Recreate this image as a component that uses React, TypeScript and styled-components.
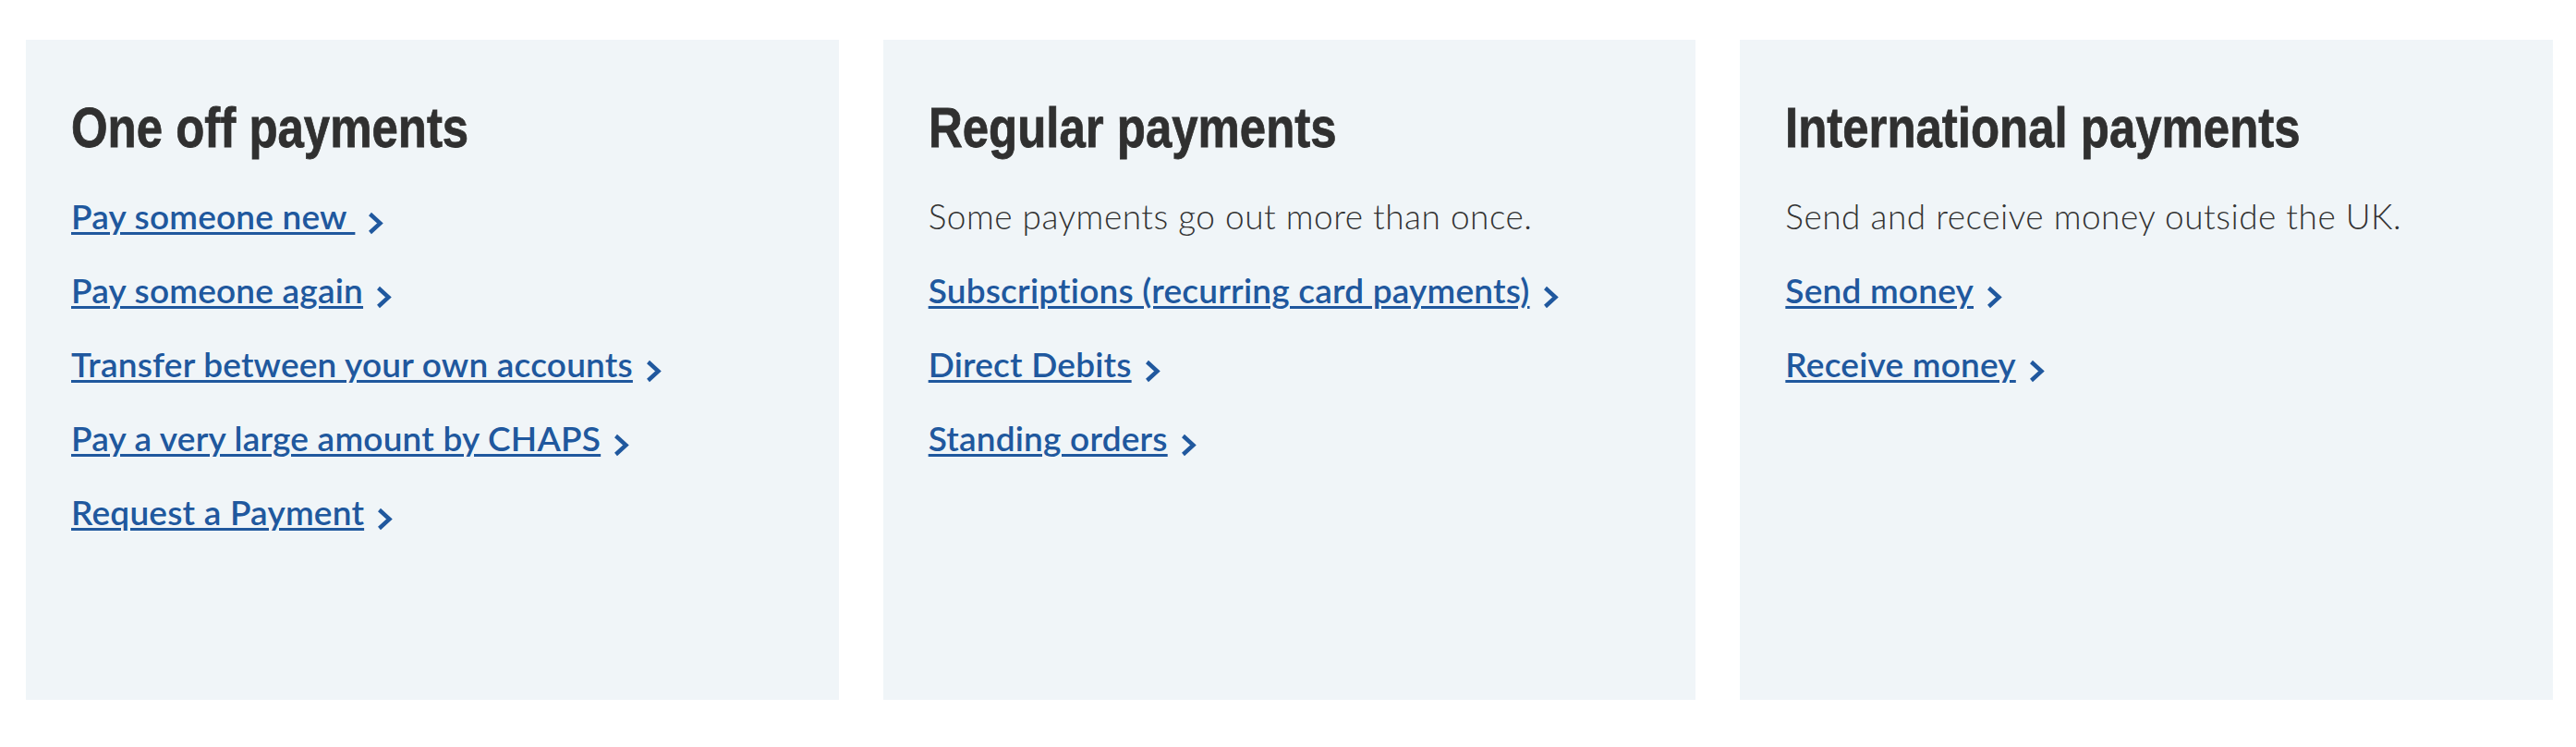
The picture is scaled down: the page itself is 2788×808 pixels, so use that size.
import React from "react";
import styled, { createGlobalStyle } from "styled-components";

const GlobalStyle = createGlobalStyle`
  body {
    margin: 0;
    background: #ffffff;
    font-family: Lato, "Liberation Sans", sans-serif;
  }
`;

const Panels = styled.section`
  display: flex;
  gap: 48px;
  padding: 43px 25px 0 28px;
`;

const Card = styled.div`
  flex: 1;
  height: 714px;
  box-sizing: border-box;
  padding: 64px 48px 0 49px;
  background: #f0f5f8;
`;

/* narrow bold headline: regular bold face squeezed horizontally */
const Heading = styled.h2`
  display: inline-block;
  margin: 0 0 25px;
  font-family: "Liberation Sans", Arial, sans-serif;
  font-size: 61px;
  line-height: 62px;
  font-weight: 700;
  color: #303030;
  -webkit-text-stroke: 0.8px #303030;
  white-space: nowrap;
  transform: scaleX(0.835);
  transform-origin: left center;
`;

const Body = styled.div`
  display: block;
`;

const Intro = styled.p`
  margin: 0;
  font-size: 37px;
  letter-spacing: 0.5px;
  line-height: 80px;
  font-weight: 300;
  color: #333333;
`;

const LinkList = styled.ul`
  list-style: none;
  margin: 0;
  padding: 0;
`;

const LinkRow = styled.li`
  font-size: 37px;
  letter-spacing: 0.2px;
  line-height: 80px;
  white-space: pre;
`;

const Link = styled.a`
  color: #20589e;
  font-weight: 600;
  text-decoration: underline;
  text-decoration-thickness: 3px;
  text-underline-offset: 3px;
`;

const Chevron = styled.svg`
  width: 17px;
  height: 25px;
  margin-left: 14px;
  vertical-align: -6px;
`;

const Arrow = () => (
  <Chevron viewBox="0 0 17 25">
    <path d="M2.5 2.5 L13.5 12.5 L2.5 22.5" fill="none" stroke="#20589e" strokeWidth="4.4" />
  </Chevron>
);

type Panel = {
  title: string;
  intro?: string;
  links: string[];
};

const panels: Panel[] = [
  {
    title: "One off payments",
    links: [
      "Pay someone new ",
      "Pay someone again",
      "Transfer between your own accounts",
      "Pay a very large amount by CHAPS",
      "Request a Payment",
    ],
  },
  {
    title: "Regular payments",
    intro: "Some payments go out more than once.",
    links: ["Subscriptions (recurring card payments)", "Direct Debits", "Standing orders"],
  },
  {
    title: "International payments",
    intro: "Send and receive money outside the UK.",
    links: ["Send money", "Receive money"],
  },
];

export default function App() {
  return (
    <>
      <GlobalStyle />
      <Panels>
        {panels.map((p) => (
          <Card key={p.title}>
            <Heading>{p.title}</Heading>
            <Body>
              {p.intro && <Intro>{p.intro}</Intro>}
              <LinkList>
                {p.links.map((l) => (
                  <LinkRow key={l}>
                    <Link href="#">{l}</Link>
                    <Arrow />
                  </LinkRow>
                ))}
              </LinkList>
            </Body>
          </Card>
        ))}
      </Panels>
    </>
  );
}
